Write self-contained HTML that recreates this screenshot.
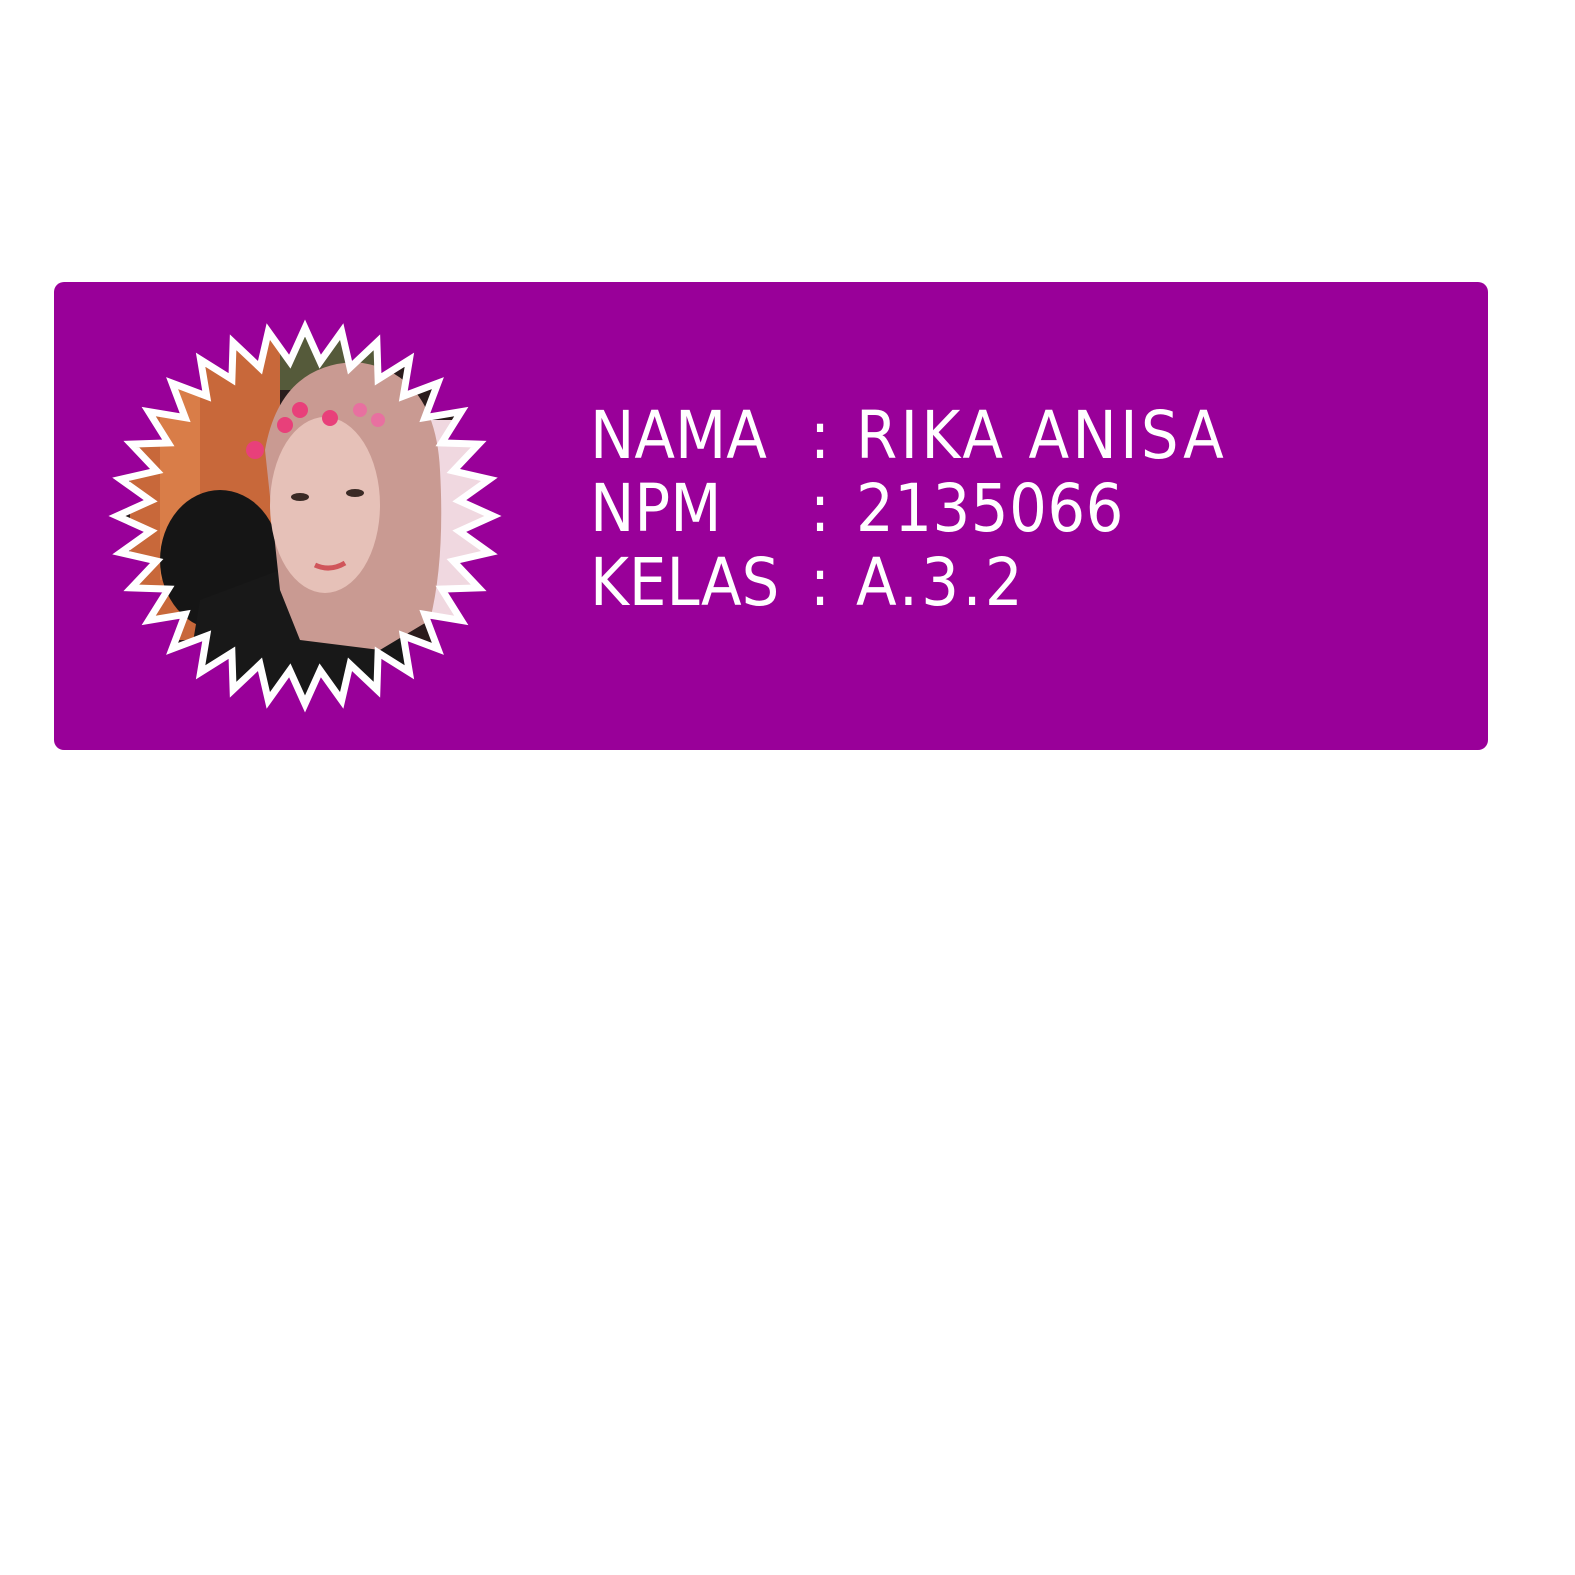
<!DOCTYPE html>
<html><head><meta charset="utf-8">
<style>
html,body{margin:0;padding:0;background:#fff;width:1575px;height:1575px;overflow:hidden}
.card{position:absolute;left:54px;top:282px;width:1434px;height:468px;background:#990099;border-radius:10px}
.t{position:absolute;color:#fff;font-family:"DejaVu Sans Condensed","DejaVu Sans","Liberation Sans",sans-serif;font-stretch:condensed;font-size:66px;line-height:66px;white-space:nowrap}
svg{position:absolute;left:0;top:0}
</style></head><body>
<div class="card"></div>
<svg width="1575" height="1575" viewBox="0 0 1575 1575">
<defs><clipPath id="c"><polygon id="sp" points=""/></clipPath></defs>
<g clip-path="url(#c)">
<rect x="100" y="320" width="410" height="400" fill="#2a1c1c"/>
<rect x="130" y="340" width="150" height="300" fill="#c8683a"/>
<rect x="160" y="380" width="40" height="200" fill="#d97d48"/>
<rect x="280" y="330" width="100" height="60" fill="#555a3a"/>
<rect x="420" y="420" width="90" height="200" fill="#f0d8e0"/>
<ellipse cx="220" cy="560" rx="60" ry="70" fill="#151515"/>
<path d="M180 720 L200 600 L280 570 L380 620 L440 650 L450 720 Z" fill="#181818"/>
<path d="M265 450 Q280 365 355 362 Q435 370 440 470 Q445 560 430 620 L380 650 L300 640 L280 590 Z" fill="#c99a92"/>
<ellipse cx="325" cy="505" rx="55" ry="88" fill="#e6c1b8"/>
<ellipse cx="300" cy="497" rx="9" ry="4" fill="#3a2a25"/>
<ellipse cx="355" cy="493" rx="9" ry="4" fill="#3a2a25"/>
<path d="M315 565 Q330 572 345 563" stroke="#d0555a" stroke-width="5" fill="none"/>
<g fill="#e8407a"><circle cx="255" cy="450" r="9"/><circle cx="285" cy="425" r="8"/><circle cx="300" cy="410" r="8"/><circle cx="330" cy="418" r="8"/><circle cx="360" cy="410" r="7" fill="#e870a0"/><circle cx="378" cy="420" r="7" fill="#e870a0"/></g>
</g>
<use href="#sp" fill="none" stroke="#fff" stroke-width="7"/>
</svg>
<div class="t" style="left:590px;top:403px">NAMA</div>
<div class="t" style="left:810px;top:403px">:</div>
<div class="t" style="left:856px;top:403px;letter-spacing:3.3px">RIKA ANISA</div>
<div class="t" style="left:590px;top:476px">NPM</div>
<div class="t" style="left:810px;top:476px">:</div>
<div class="t" style="left:856px;top:476px;letter-spacing:0.5px">2135066</div>
<div class="t" style="left:590px;top:550px">KELAS</div>
<div class="t" style="left:810px;top:550px">:</div>
<div class="t" style="left:856px;top:550px;letter-spacing:3.5px">A.3.2</div>
<script>
var cx=305,cy=516,R=188,r=155,n=32,p=[];
for(var i=0;i<n*2;i++){var a=-Math.PI/2+i*Math.PI/n;var rr=i%2?r:R;p.push((cx+rr*Math.cos(a)).toFixed(1)+","+(cy+rr*Math.sin(a)).toFixed(1));}
document.getElementById("sp").setAttribute("points",p.join(" "));
</script>
</body></html>
